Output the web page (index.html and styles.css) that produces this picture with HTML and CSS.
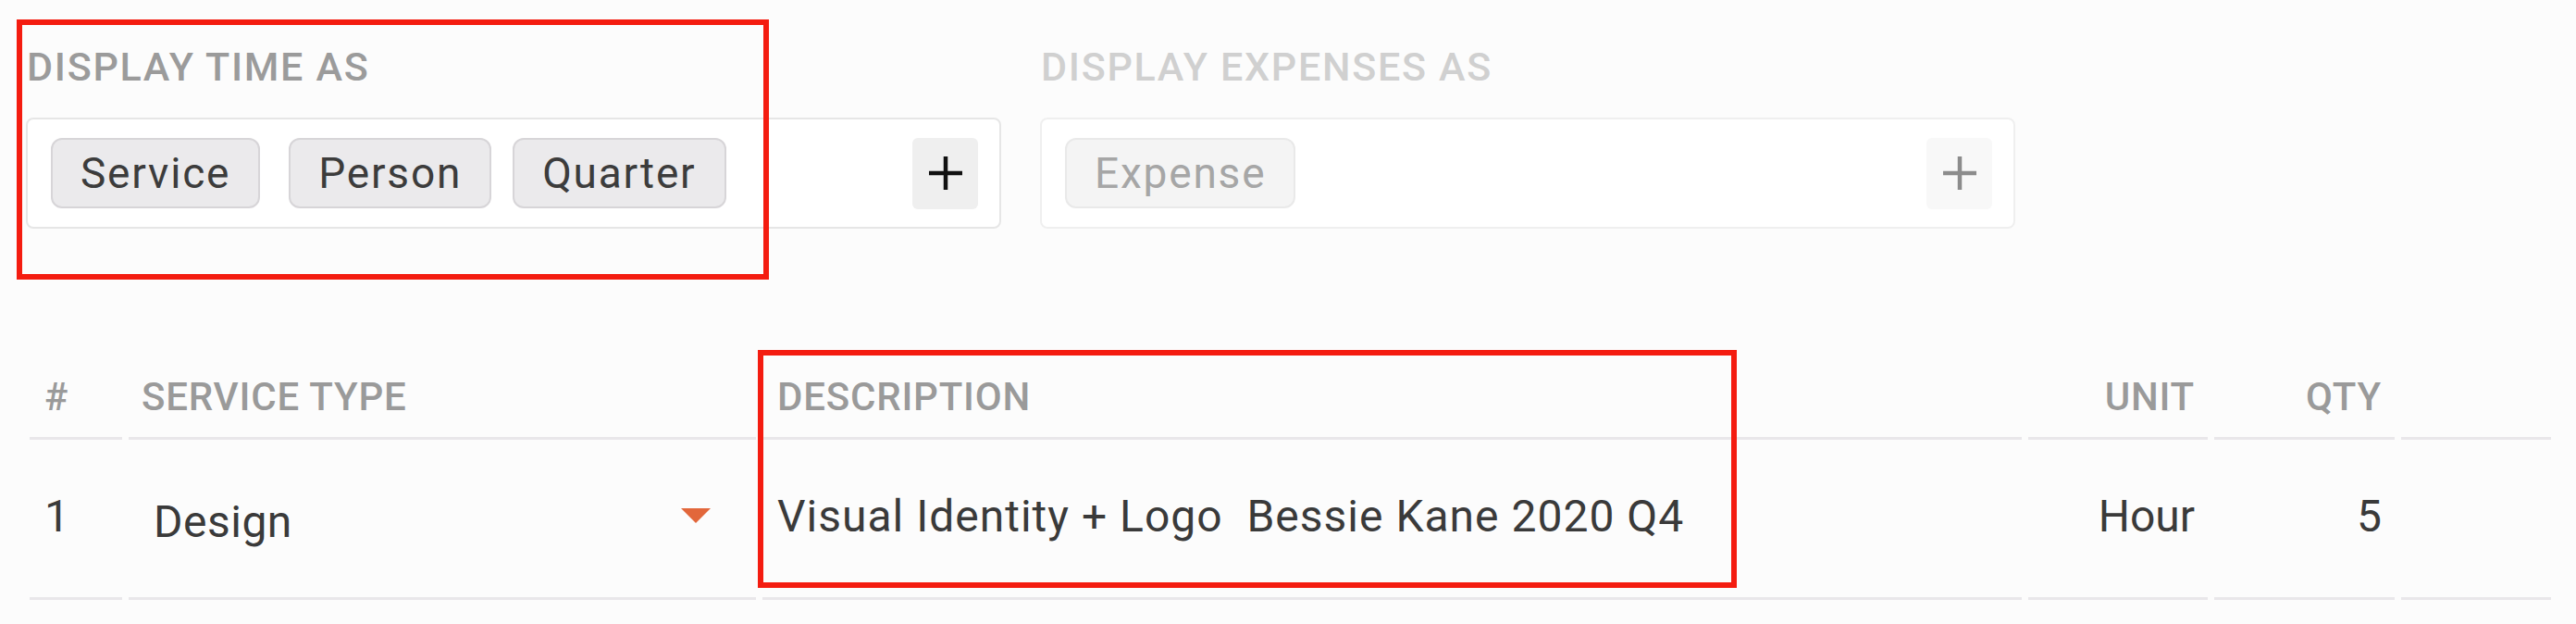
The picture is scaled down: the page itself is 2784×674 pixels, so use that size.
FILE: index.html
```html
<!DOCTYPE html>
<html lang="en">
<head>
<meta charset="utf-8">
<title>Invoice display settings</title>
<link rel="stylesheet" href="styles.css">
</head>
<body>
<div class="page">
  <div class="filters">
    <section class="filter">
      <h2 class="filter-label">DISPLAY TIME AS</h2>
      <div class="filter-box">
        <span class="chip">Service</span>
        <span class="chip chip-person">Person</span>
        <span class="chip chip-quarter">Quarter</span>
        <button class="add-btn" type="button" aria-label="Add">
          <svg viewBox="0 0 40 40" width="40" height="40"><path d="M20 2V38M2 20H38" stroke="#111" stroke-width="4.5" fill="none"/></svg>
        </button>
      </div>
    </section>
    <section class="filter filter-disabled">
      <h2 class="filter-label">DISPLAY EXPENSES AS</h2>
      <div class="filter-box">
        <span class="chip">Expense</span>
        <button class="add-btn" type="button" aria-label="Add">
          <svg viewBox="0 0 40 40" width="40" height="40"><path d="M20 2V38M2 20H38" stroke="#8c8c8c" stroke-width="4.5" fill="none"/></svg>
        </button>
      </div>
    </section>
  </div>

  <div class="table">
    <div class="th">#</div>
    <div class="th">SERVICE TYPE</div>
    <div class="th">DESCRIPTION</div>
    <div class="th right">UNIT</div>
    <div class="th right">QTY</div>
    <div class="th"></div>

    <div class="td">1</div>
    <div class="td select"><span class="select-text">Design</span><span class="caret"></span></div>
    <div class="td desc">Visual Identity + Logo&nbsp; Bessie Kane 2020 Q4</div>
    <div class="td right">Hour</div>
    <div class="td right">5</div>
    <div class="td"></div>
  </div>

  <div class="mark mark-filter"></div>
  <div class="mark mark-desc"></div>
</div>
</body>
</html>
```

FILE: styles.css
```css
html, body {
  margin: 0;
  padding: 0;
}

body {
  background: #fcfcfc;
  font-family: Roboto, "Liberation Sans", sans-serif;
  color: #3a3a3a;
}

.page {
  position: relative;
  padding: 51px 24px 0 28px;
}

.filters {
  display: flex;
  gap: 42px;
}

.filter {
  width: 1054px;
}

.filter-label {
  margin: 0 0 33px 1px;
  font-size: 43px;
  line-height: 43px;
  font-weight: 500;
  color: #9b9b9b;
  letter-spacing: 1.7px;
}

.filter-box {
  box-sizing: border-box;
  height: 120px;
  display: flex;
  align-items: center;
  padding: 0 23px 0 25px;
  border: 2px solid #e6e6e6;
  border-radius: 8px;
  background: #ffffff;
}

.chip {
  box-sizing: border-box;
  height: 76px;
  display: flex;
  align-items: center;
  padding: 0 30px;
  margin-right: 31px;
  border: 2px solid #d7d5d8;
  border-radius: 12px;
  background: #ebeaec;
  font-size: 46px;
  color: #3c3c3c;
  letter-spacing: 1.8px;
}

.chip-person {
  margin-right: 23px;
}

.add-btn {
  margin-left: auto;
  width: 71px;
  height: 77px;
  display: flex;
  align-items: center;
  justify-content: center;
  padding: 0;
  border: 0;
  border-radius: 6px;
  background: #efefef;
}

.filter-disabled .filter-label {
  color: #d0d0d0;
}

.filter-disabled .filter-box {
  border-color: #efefef;
}

.filter-disabled .chip {
  background: #f4f4f4;
  border-color: #e9e9e9;
  color: #a6a6a6;
}

.filter-disabled .add-btn {
  background: #f8f8f8;
}

.table {
  margin: 161px 0 0 4px;
  display: grid;
  grid-template-columns: 100px 678px 1361px 194px 195px 162px;
  column-gap: 7px;
}

.th {
  padding: 0 14px 22px 16px;
  font-size: 42px;
  line-height: 42px;
  height: 42px;
  font-weight: 500;
  color: #9a9a9a;
  letter-spacing: 0.8px;
  border-bottom: 3px solid #e9e7ea;
}

.td {
  padding: 59px 14px 63px 16px;
  font-size: 48px;
  line-height: 48px;
  height: 48px;
  color: #3a3a3a;
  border-bottom: 3px solid #e9e7ea;
  white-space: nowrap;
}

.desc {
  letter-spacing: 1px;
}

.right {
  text-align: right;
}

.th:nth-child(2) {
  padding-left: 14px;
}

.select {
  display: flex;
  align-items: flex-start;
  justify-content: space-between;
  padding-left: 27px;
  padding-right: 49px;
}

.select-text {
  margin-top: 6px;
  letter-spacing: 0.5px;
}

.caret {
  width: 0;
  height: 0;
  margin-top: 15px;
  border-left: 16px solid transparent;
  border-right: 16px solid transparent;
  border-top: 16px solid #e2673b;
}

.mark {
  position: absolute;
  box-sizing: border-box;
  border: 6px solid #f41c10;
  pointer-events: none;
}

.mark-filter {
  left: 18px;
  top: 21px;
  width: 813px;
  height: 281px;
}

.mark-desc {
  left: 819px;
  top: 378px;
  width: 1058px;
  height: 257px;
}
```
